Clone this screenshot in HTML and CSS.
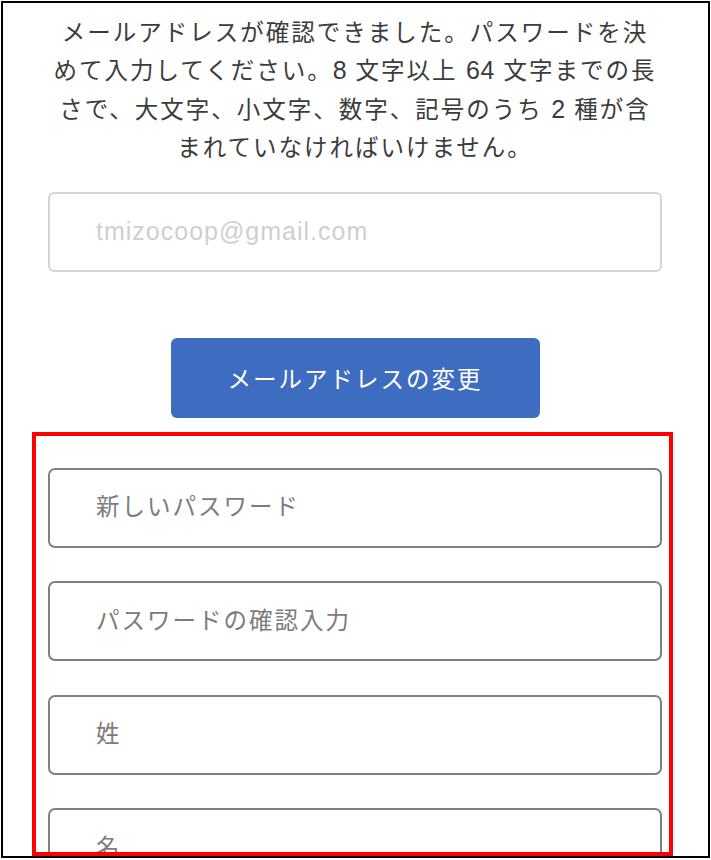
FILE: index.html
```html
<!DOCTYPE html>
<html lang="ja">
<head>
<meta charset="utf-8">
<title>パスワード設定</title>
<link rel="stylesheet" href="styles.css">
</head>
<body>
<div class="frame">
  <main class="column">
    <p class="intro">メールアドレスが確認できました。パスワードを決<br>めて入力してください。<span class="num">8</span> 文字以上 <span class="num">64</span> 文字までの長<br>さで、大文字、小文字、数字、記号のうち <span class="num">2</span> 種が含<br>まれていなければいけません。</p>
    <input class="field field-email" type="email" placeholder="tmizocoop@gmail.com">
    <div class="btn-row">
      <button class="btn" type="button">メールアドレスの変更</button>
    </div>
    <section class="highlight">
      <input class="field" type="password" placeholder="新しいパスワード">
      <input class="field" type="password" placeholder="パスワードの確認入力">
      <input class="field" type="text" placeholder="姓">
      <input class="field" type="text" placeholder="名">
    </section>
  </main>
</div>
</body>
</html>
```
FILE: styles.css
```css
* { box-sizing: border-box; }
html, body { margin: 0; padding: 0; background: #fff; }
body {
  font-family: "Liberation Sans", "Noto Sans CJK JP", sans-serif;
  color: #3c3c3c;
}
.frame {
  margin: 1px 0 0 1px;
  width: 709px;
  height: 857px;
  border: 2px solid #000;
  overflow: hidden;
  background: #fff;
}
.column {
  width: 614px;
  margin-left: 45px;
  display: flex;
  flex-direction: column;
}
.intro {
  margin: 11px -20px 0;
  font-size: 23.5px;
  letter-spacing: 2px;
  line-height: 38.4px;
  text-align: center;
  white-space: nowrap;
  color: #3c3c3c;
}
.num {
  font-size: 25px;
  letter-spacing: 0.5px;
  line-height: 0;
}
.field {
  display: block;
  width: 100%;
  height: 80px;
  margin: 0;
  padding: 0 0 0 46px;
  border: 2px solid #808080;
  border-radius: 7px;
  background: #fff;
  font-family: "Liberation Sans", "Noto Sans CJK JP", sans-serif;
  font-size: 23.5px;
  letter-spacing: 2px;
  color: #333;
  outline: none;
}
.field::placeholder { color: #7c7c7c; letter-spacing: 2px; opacity: 1; }
.field-email {
  margin-top: 24px;
  border: 2px solid #d4d4d4;
  border-radius: 6px;
  font-size: 25px;
  letter-spacing: 1px;
}
.field-email::placeholder { color: #cfcfcf; letter-spacing: 1px; }
.btn-row {
  display: flex;
  justify-content: center;
  margin-top: 66px;
}
.btn {
  width: 369px;
  height: 80px;
  border: none;
  border-radius: 6px;
  background: #3d6cc1;
  color: #fff;
  font-family: "Liberation Sans", "Noto Sans CJK JP", sans-serif;
  font-size: 23.5px;
  letter-spacing: 2px;
  padding: 0;
}
.highlight {
  margin: 14px 0 0 -16px;
  width: 641px;
  height: 424px;
  border: 4px solid #ff0000;
  padding: 32px 7px 0 12px;
  display: flex;
  flex-direction: column;
  gap: 33.5px;
  overflow: hidden;
}
.highlight .field { flex: none; }
```
